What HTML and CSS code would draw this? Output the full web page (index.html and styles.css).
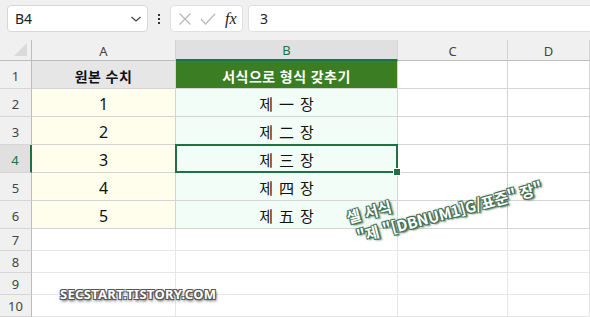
FILE: index.html
```html
<!DOCTYPE html>
<html lang="ko">
<head>
<meta charset="utf-8">
<link rel="stylesheet" href="styles.css">
</head>
<body>
<div class="topbar">
  <div class="namebox">
    <span class="ref">B4</span>
    <svg class="chev" width="12" height="8" viewBox="0 0 12 8"><path d="M1.5 2 L6 6 L10.5 2" fill="none" stroke="#444" stroke-width="1.3"/></svg>
  </div>
  <div class="dots"><i></i><i></i><i></i></div>
  <div class="fxbox">
    <svg width="14" height="14" viewBox="0 0 14 14"><path d="M1.5 1.5 L12.5 12.5 M12.5 1.5 L1.5 12.5" stroke="#b9b9b9" stroke-width="1.3" fill="none"/></svg>
    <svg width="16" height="14" viewBox="0 0 16 14"><path d="M1 7 L5.5 12 L15 2" stroke="#b9b9b9" stroke-width="1.3" fill="none"/></svg>
    <span class="fx">fx</span>
  </div>
  <div class="formula">3</div>
</div>

<div class="sheet">
  <div class="corner"><span class="tri"></span></div>
  <div class="colh">A</div>
  <div class="colh sel">B</div>
  <div class="colh">C</div>
  <div class="colh">D</div>

  <div class="rowh">1</div>
  <div class="cell head-a">원본 수치</div>
  <div class="cell head-b">서식으로 형식 갖추기</div>
  <div class="cell"></div><div class="cell"></div>

  <div class="rowh">2</div>
  <div class="cell ca">1</div>
  <div class="cell cb">제 一 장</div>
  <div class="cell"></div><div class="cell"></div>

  <div class="rowh">3</div>
  <div class="cell ca">2</div>
  <div class="cell cb">제 二 장</div>
  <div class="cell"></div><div class="cell"></div>

  <div class="rowh sel">4</div>
  <div class="cell ca">3</div>
  <div class="cell cb active">제 三 장<span class="handle"></span></div>
  <div class="cell"></div><div class="cell"></div>

  <div class="rowh">5</div>
  <div class="cell ca">4</div>
  <div class="cell cb">제 四 장</div>
  <div class="cell"></div><div class="cell"></div>

  <div class="rowh">6</div>
  <div class="cell ca">5</div>
  <div class="cell cb">제 五 장</div>
  <div class="cell"></div><div class="cell"></div>

  <div class="rowh sm">7</div>
  <div class="cell blank"></div><div class="cell blank"></div><div class="cell blank"></div><div class="cell blank"></div>
  <div class="rowh sm">8</div>
  <div class="cell blank"></div><div class="cell blank"></div><div class="cell blank"></div><div class="cell blank"></div>
  <div class="rowh sm">9</div>
  <div class="cell blank"></div><div class="cell blank"></div><div class="cell blank"></div><div class="cell blank"></div>
  <div class="rowh sm">10</div>
  <div class="cell blank"></div><div class="cell blank"></div><div class="cell blank"></div><div class="cell blank"></div>
</div>

<div class="note">
  <div class="l1">셀 서식</div>
  <div class="l2">"제 "[DBNUM1]G/표준" 장"</div>
</div>

<div class="wm">SECSTART.TISTORY.COM</div>
</body>
</html>
```

FILE: styles.css
```css
* { box-sizing: border-box; }
html, body { margin: 0; padding: 0; }
body {
  width: 590px;
  height: 317px;
  overflow: hidden;
  background: #fff;
  font-family: "Noto Sans", "Noto Sans CJK KR", sans-serif;
  color: #222;
  position: relative;
}

.topbar {
  height: 40px;
  background: #f0f0f0;
  display: flex;
  align-items: flex-start;
  padding: 5px 0 0 7px;
}
.namebox {
  width: 141px;
  height: 27px;
  background: #fff;
  border: 1px solid #d6d6d6;
  border-radius: 4px;
  display: flex;
  align-items: center;
  justify-content: space-between;
  padding: 0 5px 0 7px;
}
.ref { font-size: 14px; color: #222; font-family: "Noto Sans", sans-serif; }
.dots {
  width: 22px;
  height: 27px;
  display: flex;
  flex-direction: column;
  align-items: center;
  justify-content: center;
  gap: 2px;
}
.dots i { width: 2px; height: 2px; background: #333; display: block; }
.fxbox {
  width: 73px;
  height: 27px;
  background: #fff;
  border: 1px solid #e0e0e0;
  border-radius: 4px;
  display: flex;
  align-items: center;
  gap: 8px;
  padding: 0 0 0 7px;
}
.fx {
  font-family: "Liberation Serif", serif;
  font-style: italic;
  font-size: 16px;
  color: #222;
  margin-left: 1px;
}
.formula {
  flex: 1;
  margin-left: 5px;
  height: 27px;
  background: #fff;
  border: 1px solid #e0e0e0;
  border-right: none;
  border-radius: 4px 0 0 4px;
  font-size: 14px;
  line-height: 25px;
  padding-left: 11px;
}

.sheet {
  display: grid;
  grid-template-columns: 32px 144px 222px 110px 82px;
  grid-template-rows: 21px repeat(6, 28px) repeat(4, 22px);
}
.corner {
  background: #f0f0f0;
  border-right: 1px solid #bdbdbd;
  border-bottom: 1px solid #bdbdbd;
  position: relative;
}
.tri {
  position: absolute;
  right: 4px;
  bottom: 4px;
  width: 0; height: 0;
  border-left: 13px solid transparent;
  border-bottom: 13px solid #dadada;
}
.colh {
  background: #f0f0f0;
  border-right: 1px solid #d3d3d3;
  border-bottom: 1px solid #bdbdbd;
  font-size: 13px;
  color: #444;
  display: flex;
  align-items: center;
  justify-content: center;
  padding-top: 1px;
}
.colh.sel {
  background: #e0e0e0;
  color: #1e7145;
  border-bottom: 2px solid #1e7145;
}
.rowh {
  background: #f0f0f0;
  border-right: 1px solid #bdbdbd;
  border-bottom: 1px solid #d6d6d6;
  font-size: 13px;
  color: #444;
  display: flex;
  align-items: flex-end;
  justify-content: center;
  padding-bottom: 3px;
}
.rowh.sm { padding-bottom: 1px; }
.rowh.sel {
  background: #e0e0e0;
  color: #1e7145;
  border-right: 2px solid #1e7145;
}
.cell {
  border-right: 1px solid #d4d4d4;
  border-bottom: 1px solid #d4d4d4;
  display: flex;
  align-items: center;
  justify-content: center;
  font-size: 15px;
  color: #111;
  font-family: "Noto Sans", "Noto Sans CJK KR", sans-serif;
  padding-top: 2px;
}
.cell.blank { border-right-color: #e6e6e6; border-bottom-color: #e6e6e6; }
.head-a {
  background: #e6e6e6;
  font-weight: bold;
  font-size: 14px;
  letter-spacing: 0.5px;
}
.head-b {
  background: #3b7d23;
  color: #fff;
  font-weight: bold;
  font-size: 14px;
  letter-spacing: 0.5px;
}
.ca { background: #fffeec; font-size: 16px; }
.cb { background: #f3fdf8; word-spacing: 2px; }
.active { position: relative; }
.active::before {
  content: "";
  position: absolute;
  left: -1px; top: -1px; right: -1px; bottom: -1px;
  border: 2px solid #1e7145;
}
.handle {
  position: absolute;
  right: -4px;
  bottom: -4px;
  width: 6px;
  height: 6px;
  background: #1e7145;
  border: 1px solid #fff;
  box-sizing: content-box;
}

.note {
  position: absolute;
  left: 354px;
  top: 206px;
  transform: rotate(-15deg);
  transform-origin: left bottom;
  color: #fff;
  font-weight: bold;
  font-family: "Noto Sans CJK KR", sans-serif;
  font-size: 15px;
  line-height: 21px;
  text-shadow: 1px 1px 0 #3f6e55, -1px -1px 0 #3f6e55, 1px -1px 0 #3f6e55, -1px 1px 0 #3f6e55, 2px 2px 2px #3f6e55, 0 0 3px #2f5a43;
  white-space: nowrap;
}
.note .l1 { padding-left: 1px; }
.note .l2 { padding-left: 6px; }

.wm {
  position: absolute;
  left: 60px;
  top: 285px;
  color: #fff;
  font-weight: bold;
  font-family: "Noto Sans", sans-serif;
  font-size: 13px;
  letter-spacing: 0.3px;
  text-shadow: 1px 1px 0 #555, -1px -1px 0 #555, 1px -1px 0 #555, -1px 1px 0 #555, 1px 2px 3px #333;
}
```
